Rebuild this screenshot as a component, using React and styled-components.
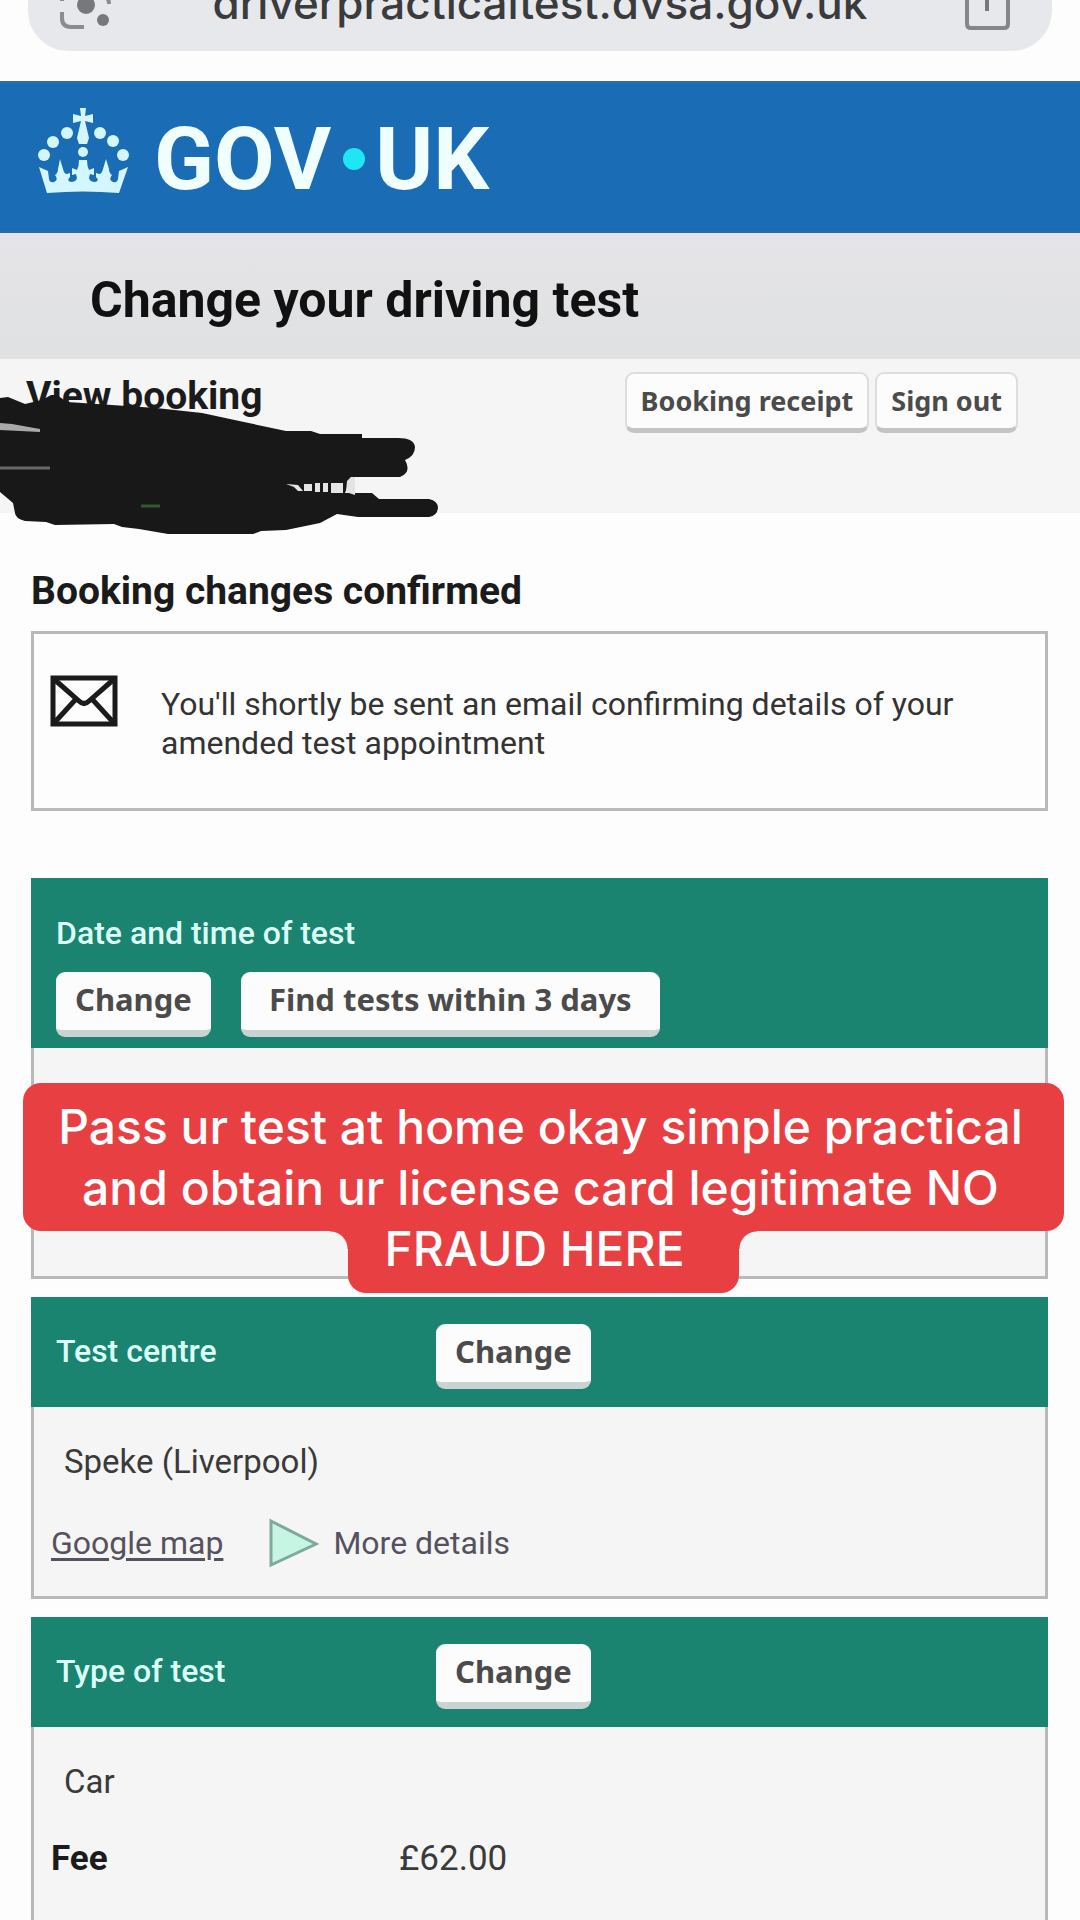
import React from "react";
import styled, { createGlobalStyle } from "styled-components";

const GlobalStyle = createGlobalStyle`
  * {
    box-sizing: border-box;
  }

  body {
    margin: 0;
    background: #fdfdfd;
    color: #1b1b1b;
    font-family: Roboto, "Noto Sans", sans-serif;
  }

  h1, h2, h3, p {
    margin: 0;
  }
`;

const Page = styled.div`
  display: flex;
  flex-direction: column;
  min-height: 100vh;
  overflow: hidden;
`;

const BrowserBar = styled.div`
  padding: 0 28px 30px;
`;

const AddressBar = styled.div`
  display: flex;
  justify-content: space-between;
  align-items: flex-end;
  height: 51px;
  padding: 0 42px 0 30px;
  background: #e7e8eb;
  border-radius: 0 0 40px 40px;
`;

const Url = styled.span`
  padding-bottom: 24px;
  color: #3a3b3d;
  font-family: Inter, sans-serif;
  font-size: 44px;
  font-weight: 500;
  line-height: 48px;
`;

const Header = styled.header`
  display: flex;
  align-items: center;
  gap: 24px;
  height: 152px;
  padding: 0 38px;
  background: #1a6db5;
  border-top: 2px solid #2f6d9c;
  border-bottom: 2px solid #2b6ca3;
`;

const Logo = styled.a`
  display: flex;
  align-items: center;
  padding-top: 4px;
  color: #f1feff;
  font-size: 88px;
  font-weight: 700;
  line-height: 104px;
  text-decoration: none;
`;

const LogoDot = styled.span`
  width: 22px;
  height: 22px;
  margin: 0 10px 0 12px;
  background: #1fe6f5;
  border-radius: 50%;
`;

const TitleBand = styled.div`
  padding: 38px 90px 30px;
  background: linear-gradient(#e5e4e8, #dfe1e2);
`;

const Title = styled.h1`
  color: #111;
  font-size: 50px;
  font-weight: 700;
  line-height: 58px;
`;

const BookingBar = styled.div`
  position: relative;
  display: flex;
  justify-content: space-between;
  align-items: flex-start;
  height: 154px;
  padding: 13px 62px 0 26px;
  background: #f5f5f5;
`;

const Heading = styled.h2`
  color: #1b1b1b;
  font-size: 39px;
  font-weight: 700;
  line-height: 48px;
`;

const Scribble = styled.svg`
  position: absolute;
  left: 0;
  top: 36px;
`;

const ButtonRow = styled.div`
  display: flex;
  gap: ${({ $gap }) => $gap};
`;

const Button = styled.button`
  height: 65px;
  padding: 0 ${({ $wide }) => ($wide ? "28px" : "19px")} 4px;
  background: #fcfcfc;
  border: none;
  border-bottom: 7px solid #c9d3cf;
  border-radius: 9px;
  color: #4b4b4b;
  font-family: "Noto Sans", sans-serif;
  font-size: 31px;
  font-weight: 700;
  white-space: nowrap;
  cursor: pointer;
`;

const SmallButton = styled(Button)`
  height: 61px;
  padding: 0 14px 2px;
  border: 2px solid #dcdedd;
  border-bottom: 5px solid #c3c4c4;
  font-size: 27px;
`;

const Main = styled.main`
  display: flex;
  flex: 1;
  flex-direction: column;
  padding: 54px 32px 0 31px;
`;

const Notice = styled.div`
  display: flex;
  align-items: flex-start;
  gap: 43px;
  margin: 16px 0 67px;
  padding: 41px 16px 45px;
  border: 3px solid #b9b9b9;
`;

const NoticeText = styled.p`
  padding-top: 10px;
  color: #333;
  font-size: 32px;
  line-height: 39px;
`;

const Card = styled.section`
  position: relative;
  margin-bottom: 18px;
  background: #f5f5f5;
  border: 3px solid #b9b9b9;
  border-top: none;

  &:last-child {
    flex: 1;
    margin-bottom: 0;
    border-bottom: none;
  }
`;

const CardHead = styled.div`
  display: grid;
  grid-template-columns: ${({ $stacked }) => ($stacked ? "1fr" : "380px 1fr")};
  row-gap: 20px;
  justify-items: start;
  margin: 0 -3px;
  padding: ${({ $stacked }) => ($stacked ? "36px 25px 11px" : "27px 25px 18px")};
  background: #1a8471;
`;

const CardTitle = styled.h3`
  color: #dcfff6;
  font-size: 32px;
  font-weight: 500;
  line-height: 38px;
  padding-top: ${({ $inline }) => ($inline ? "8px" : "0")};
`;

const CardBody = styled.div`
  min-height: ${({ $tall }) => ($tall ? "228px" : "189px")};
  padding: 35px 17px 0;
  color: #3a3a3a;
  font-size: 33px;
  line-height: 40px;
`;

const Value = styled.p`
  padding-left: 13px;
`;

const Links = styled.div`
  display: flex;
  align-items: center;
  margin-top: 36px;
  font-size: 32px;
  line-height: 50px;
`;

const MapLink = styled.a`
  color: #56515f;
  text-decoration: underline;
  text-decoration-thickness: 3px;
  text-underline-offset: 4px;
`;

const Details = styled.button`
  display: flex;
  align-items: center;
  gap: 14px;
  margin-left: 46px;
  padding: 0;
  background: none;
  border: none;
  color: #56515f;
  font-family: inherit;
  font-size: inherit;
  line-height: inherit;
  cursor: pointer;
`;

const FeeRow = styled.div`
  display: grid;
  grid-template-columns: 348px 1fr;
  margin-top: 37px;
  font-size: 35px;
`;

const Strong = styled.strong`
  color: #1b1b1b;
`;

const Caption = styled.div`
  position: absolute;
  top: 205px;
  left: -11px;
  right: -19px;
  z-index: 1;
  display: flex;
  flex-direction: column;
  align-items: center;
  color: #fff;
  font-family: Inter, sans-serif;
  font-size: 48px;
  font-weight: 500;
  line-height: 61px;
  text-align: center;
`;

const CaptionBox = styled.p`
  align-self: stretch;
  padding: 13px 6px 13px 0;
  background: #e84042;
  border-radius: 18px;
  white-space: nowrap;
`;

const CaptionTab = styled.p`
  position: relative;
  margin-top: -13px;
  padding: 0 54px 14px 36px;
  background: #e84042;
  border-radius: 0 0 18px 18px;

  &::before,
  &::after {
    content: "";
    position: absolute;
    top: 13px;
    width: 18px;
    height: 18px;
  }

  &::before {
    right: 100%;
    background: radial-gradient(circle at 0 100%, transparent 17px, #e84042 18px);
  }

  &::after {
    left: 100%;
    background: radial-gradient(circle at 100% 100%, transparent 17px, #e84042 18px);
  }
`;

function LensIcon() {
  return (
    <svg width="58" height="51" viewBox="0 0 58 51" fill="none" aria-hidden="true">
      <path d="M4 12v6q0 9 9 9h13M4 -2v3M49 -2q2 2 2 6" stroke="#8b8c8f" strokeWidth="4" />
      <circle cx="28" cy="5" r="9" fill="#77787b" />
      <circle cx="45" cy="20" r="6" fill="#77787b" />
    </svg>
  );
}

function ShareIcon() {
  return (
    <svg width="46" height="51" viewBox="0 0 46 51" fill="none" aria-hidden="true">
      <path d="M3 -4v28q0 4 4 4h33q4 0 4 -4V-4" stroke="#85858c" strokeWidth="4" />
      <path d="M23 -4v15" stroke="#77787b" strokeWidth="4" />
    </svg>
  );
}

function Crown() {
  return (
    <svg width="92" height="104" viewBox="0 0 92 104" fill="#d3f6ff" aria-hidden="true">
      <path d="M42 3h6l-1 8 8-2v9l-8-2 4 17-2 6h-8l-2-6 4-17-8 2V9l8 2z" />
      <circle cx="45" cy="47" r="5" />
      <circle cx="6" cy="50" r="6" />
      <circle cx="15" cy="37" r="6" />
      <circle cx="29" cy="28" r="6" />
      <circle cx="62" cy="28" r="6" />
      <circle cx="75" cy="36" r="6" />
      <circle cx="85" cy="50" r="6" />
      <path d="M1 62l9 4 1 8q1 4 5 3 5-2 1-7 3-2 3-6l2-10 3 10q1 5 4 5l3-1v4q-4 4 1 5 5 0 6-4l-1-4-4 1v-7l5 2q2-4 2-10h8q0 6 2 10l5-2v7l-4-1-1 4q1 4 6 4 5-1 1-5v-4l3 1q3 0 4-5l3-10 3 10q0 4 3 6-4 5 1 7 4 1 5-3l1-8 9-4-9 26q-36-3-72 0z" />
    </svg>
  );
}

function Envelope() {
  return (
    <svg width="68" height="52" viewBox="0 0 68 52" fill="none" stroke="#1b1b1b" aria-hidden="true">
      <rect x="3" y="3" width="62" height="46" strokeWidth="5" />
      <path d="M5 5l24 21q5 5 10 0L63 5M5 47l21-23M63 47L42 24" strokeWidth="5" />
    </svg>
  );
}

function Redaction() {
  return (
    <Scribble width="440" height="140" viewBox="0 0 440 140" aria-hidden="true">
      <path
        fill="#181818"
        d="M0 3L8 2 25 9 42 5 51 0 57 0 67 7 97 9 156 13 202 18 244 27 286 36 311 36 320 39 362 39 362 43 398 43Q414 43 415 52 415 61 405 65 412 77 400 82L351 82 345 98 372 98 379 104 429 104Q438 106 438 113 437 121 429 122L358 122 337 119 320 128 286 135 261 136 253 139 168 139 139 134 122 132 114 129 55 130 46 127 25 126Q15 123 15 118L13 108 0 97Z"
      />
      <path fill="#a9a9a9" d="M0 28L12 29 40 34 40 37 0 35z" />
      <path stroke="#686868" strokeWidth="3" d="M0 73H50" />
      <path stroke="#2f5a30" strokeWidth="3" d="M141 111H160" />
      <path fill="#e4e4e4" d="M286 89l12 1 5 6h-5l-4-4zM304 89h8v7h-8zM315 88h5v9h-5zM323 88h5v9h-5zM331 88h12v10h-12zM347 86l4-4h4v18l-9-3z" />
    </Scribble>
  );
}

function App() {
  return (
    <>
      <GlobalStyle />
      <Page>
        <BrowserBar>
          <AddressBar>
            <LensIcon />
            <Url>driverpracticaltest.dvsa.gov.uk</Url>
            <ShareIcon />
          </AddressBar>
        </BrowserBar>

        <Header>
          <Crown />
          <Logo href="#">
            GOV
            <LogoDot />
            UK
          </Logo>
        </Header>

        <TitleBand>
          <Title>Change your driving test</Title>
        </TitleBand>

        <BookingBar>
          <Heading>View booking</Heading>
          <ButtonRow $gap="6px">
            <SmallButton>Booking receipt</SmallButton>
            <SmallButton>Sign out</SmallButton>
          </ButtonRow>
          <Redaction />
        </BookingBar>

        <Main>
          <Heading>Booking changes confirmed</Heading>
          <Notice>
            <Envelope />
            <NoticeText>
              You'll shortly be sent an email confirming details of your
              <br />
              amended test appointment
            </NoticeText>
          </Notice>

          <Card>
            <CardHead $stacked>
              <CardTitle>Date and time of test</CardTitle>
              <ButtonRow $gap="30px">
                <Button>Change</Button>
                <Button $wide>Find tests within 3 days</Button>
              </ButtonRow>
            </CardHead>
            <CardBody $tall />
            <Caption>
              <CaptionBox>
                Pass ur test at home okay simple practical
                <br />
                and obtain ur license card legitimate NO
              </CaptionBox>
              <CaptionTab>FRAUD HERE</CaptionTab>
            </Caption>
          </Card>

          <Card>
            <CardHead>
              <CardTitle $inline>Test centre</CardTitle>
              <Button>Change</Button>
            </CardHead>
            <CardBody>
              <Value>Speke (Liverpool)</Value>
              <Links>
                <MapLink href="#">Google map</MapLink>
                <Details>
                  <svg width="50" height="50" viewBox="0 0 50 50" aria-hidden="true">
                    <path d="M2 3L47 26 2 47z" fill="#c6f5e3" stroke="#7fa99c" strokeWidth="3" />
                  </svg>
                  More details
                </Details>
              </Links>
            </CardBody>
          </Card>

          <Card>
            <CardHead>
              <CardTitle $inline>Type of test</CardTitle>
              <Button>Change</Button>
            </CardHead>
            <CardBody>
              <Value>Car</Value>
              <FeeRow>
                <Strong>Fee</Strong>
                <span>£62.00</span>
              </FeeRow>
            </CardBody>
          </Card>
        </Main>
      </Page>
    </>
  );
}

export default App;
